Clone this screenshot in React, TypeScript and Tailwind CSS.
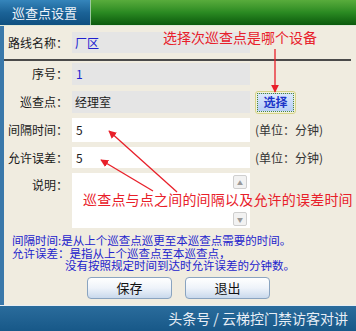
import React from "react";

const cjk = { fontFamily: '"Noto Sans CJK SC", "Noto Sans", sans-serif' };

function Label({ text }: { text: string }) {
  return (
    <div className="w-[60px] shrink-0 text-right text-[12px] leading-none text-[#1a1a1a]">
      {text}
    </div>
  );
}

export default function App() {
  return (
    <div
      className="relative flex h-[331px] w-[356px] flex-col overflow-hidden bg-[#f0ece0]"
      style={cjk}
    >
      {/* Title bar */}
      <div className="flex h-[25px] shrink-0">
        <div className="flex w-[90px] items-center bg-gradient-to-b from-[#3585bb] via-[#1b6397] to-[#0f4f80] pl-[12px] text-[13px] text-[#eef4fa]">
          巡查点设置
        </div>
        <div className="flex-1 border-l border-[#9cc8a0] bg-gradient-to-b from-[#58ac3c] via-[#2a8a22] to-[#0b5a0d]" />
      </div>
      <div className="h-px shrink-0 bg-[#dfe8d8]" />

      {/* Body */}
      <div className="flex flex-1 flex-col border-l-[4px] border-[#3a78aa] pt-[6px]">
        {/* Row: route */}
        <div className="flex h-[21px] items-center pl-[4px]">
          <Label text="路线名称：" />
          <div className="ml-[4px] flex h-full w-[178px] items-center bg-[#e5e5e5] pl-[3px] text-[12px] text-[#2020d0]">
            厂区
          </div>
        </div>

        <div className="mr-[5px] mt-[6px] h-[2px] bg-[#4a4a4a]" />

        {/* Row: index */}
        <div className="mt-[2px] flex h-[22px] items-center pl-[4px]">
          <Label text="序号：" />
          <div className="ml-[4px] flex h-full w-[178px] items-center bg-[#e5e5e5] pl-[4px] text-[12px] text-[#2020d0]">
            1
          </div>
        </div>

        {/* Row: checkpoint */}
        <div className="mt-[6px] flex h-[22px] items-center pl-[4px]">
          <Label text="巡查点：" />
          <div className="ml-[4px] flex h-full w-[178px] items-center bg-[#e5e5e5] pl-[3px] text-[12px] text-[#1a1a1a]">
            经理室
          </div>
          <button className="ml-[5px] h-[23px] w-[41px] rounded-[3px] border border-[#d6d48a] bg-[#f4f2d8] p-[1px]">
            <div className="flex h-full w-full items-center justify-center border border-dotted border-[#4e8a3a] bg-gradient-to-b from-[#dce8fc] to-[#b8cff6] text-[12px] font-bold text-[#1c36c8]">
              选择
            </div>
          </button>
        </div>

        {/* Row: interval */}
        <div className="mt-[5px] flex h-[24px] items-center pl-[4px]">
          <Label text="间隔时间：" />
          <div className="ml-[4px] flex h-full w-[178px] items-center bg-white pl-[4px] text-[12px] text-[#1a1a1a]">
            5
          </div>
          <div className="ml-[5px] text-[12px] text-[#333]">(单位：分钟)</div>
        </div>

        {/* Row: tolerance */}
        <div className="mt-[5px] flex h-[21px] items-center pl-[4px]">
          <Label text="允许误差：" />
          <div className="ml-[4px] flex h-full w-[178px] items-center bg-white pl-[4px] text-[12px] text-[#1a1a1a]">
            5
          </div>
          <div className="ml-[5px] text-[12px] text-[#333]">(单位：分钟)</div>
        </div>

        {/* Row: description */}
        <div className="mt-[5px] flex h-[55px] pl-[4px]">
          <div className="pt-[6px]">
            <Label text="说明：" />
          </div>
          <div className="ml-[4px] flex h-full w-[178px] justify-end bg-white pr-[3px]">
            <div className="flex w-[14px] flex-col justify-between py-[2px]">
              <div className="flex h-[14px] items-center justify-center rounded-[2px] border border-[#cfcfcf] bg-[#f2f2f2] text-[6px] text-[#999]">
                ▲
              </div>
              <div className="flex h-[14px] items-center justify-center rounded-[2px] border border-[#cfcfcf] bg-[#f2f2f2] text-[6px] text-[#999]">
                ▼
              </div>
            </div>
          </div>
        </div>

        {/* Notes */}
        <div className="mt-[6px] pl-[8px] text-[11.5px] leading-[12.5px] text-[#2323cc]">
          <div>间隔时间:是从上个巡查点巡更至本巡查点需要的时间。</div>
          <div>允许误差：是指从上个巡查点至本巡查点，</div>
          <div className="pl-[53px]">没有按照规定时间到达时允许误差的分钟数。</div>
        </div>

        {/* Buttons */}
        <div className="mt-[5px] flex pl-[83px]">
          <button className="h-[22px] w-[85px] rounded-[4px] border border-[#8aa4c0] bg-gradient-to-b from-white via-[#eef3fa] to-[#c9d9ec] text-[13px] text-[#111]">
            保存
          </button>
          <button className="ml-[13px] h-[22px] w-[85px] rounded-[4px] border border-[#8aa4c0] bg-gradient-to-b from-white via-[#eef3fa] to-[#c9d9ec] text-[13px] text-[#111]">
            退出
          </button>
        </div>
      </div>

      {/* Bottom bar */}
      <div className="flex h-[26px] shrink-0 items-center justify-end border-t border-[#e8eef4] bg-gradient-to-b from-[#2a6c9c] to-[#175888] pr-[8px] text-[14px] text-[#e8eef6]">
        头条号 / 云梯控门禁访客对讲
      </div>

      {/* Annotations */}
      <div className="pointer-events-none absolute left-[163px] top-[30px] text-[14px] leading-none text-[#e8202a]">
        选择次巡查点是哪个设备
      </div>
      <div className="pointer-events-none absolute left-[83px] top-[192px] text-[14px] leading-none tracking-[0.2px] text-[#e8202a]">
        巡查点与点之间的间隔以及允许的误差时间
      </div>
      <svg
        className="pointer-events-none absolute left-0 top-0"
        width="356"
        height="331"
        viewBox="0 0 356 331"
      >
        <defs>
          <marker
            id="ah"
            viewBox="0 0 10 10"
            refX="9"
            refY="5"
            markerWidth="8"
            markerHeight="8"
            markerUnits="userSpaceOnUse"
            orient="auto"
          >
            <path d="M0 0 L10 5 L0 10 z" fill="#e8202a" />
          </marker>
        </defs>
        <line x1="275" y1="49" x2="275" y2="92" stroke="#e8202a" strokeWidth="1.3" markerEnd="url(#ah)" />
        <line x1="177" y1="192" x2="109" y2="131" stroke="#e8202a" strokeWidth="1.3" markerEnd="url(#ah)" />
        <line x1="153" y1="191" x2="101" y2="160" stroke="#e8202a" strokeWidth="1.3" markerEnd="url(#ah)" />
      </svg>
    </div>
  );
}
